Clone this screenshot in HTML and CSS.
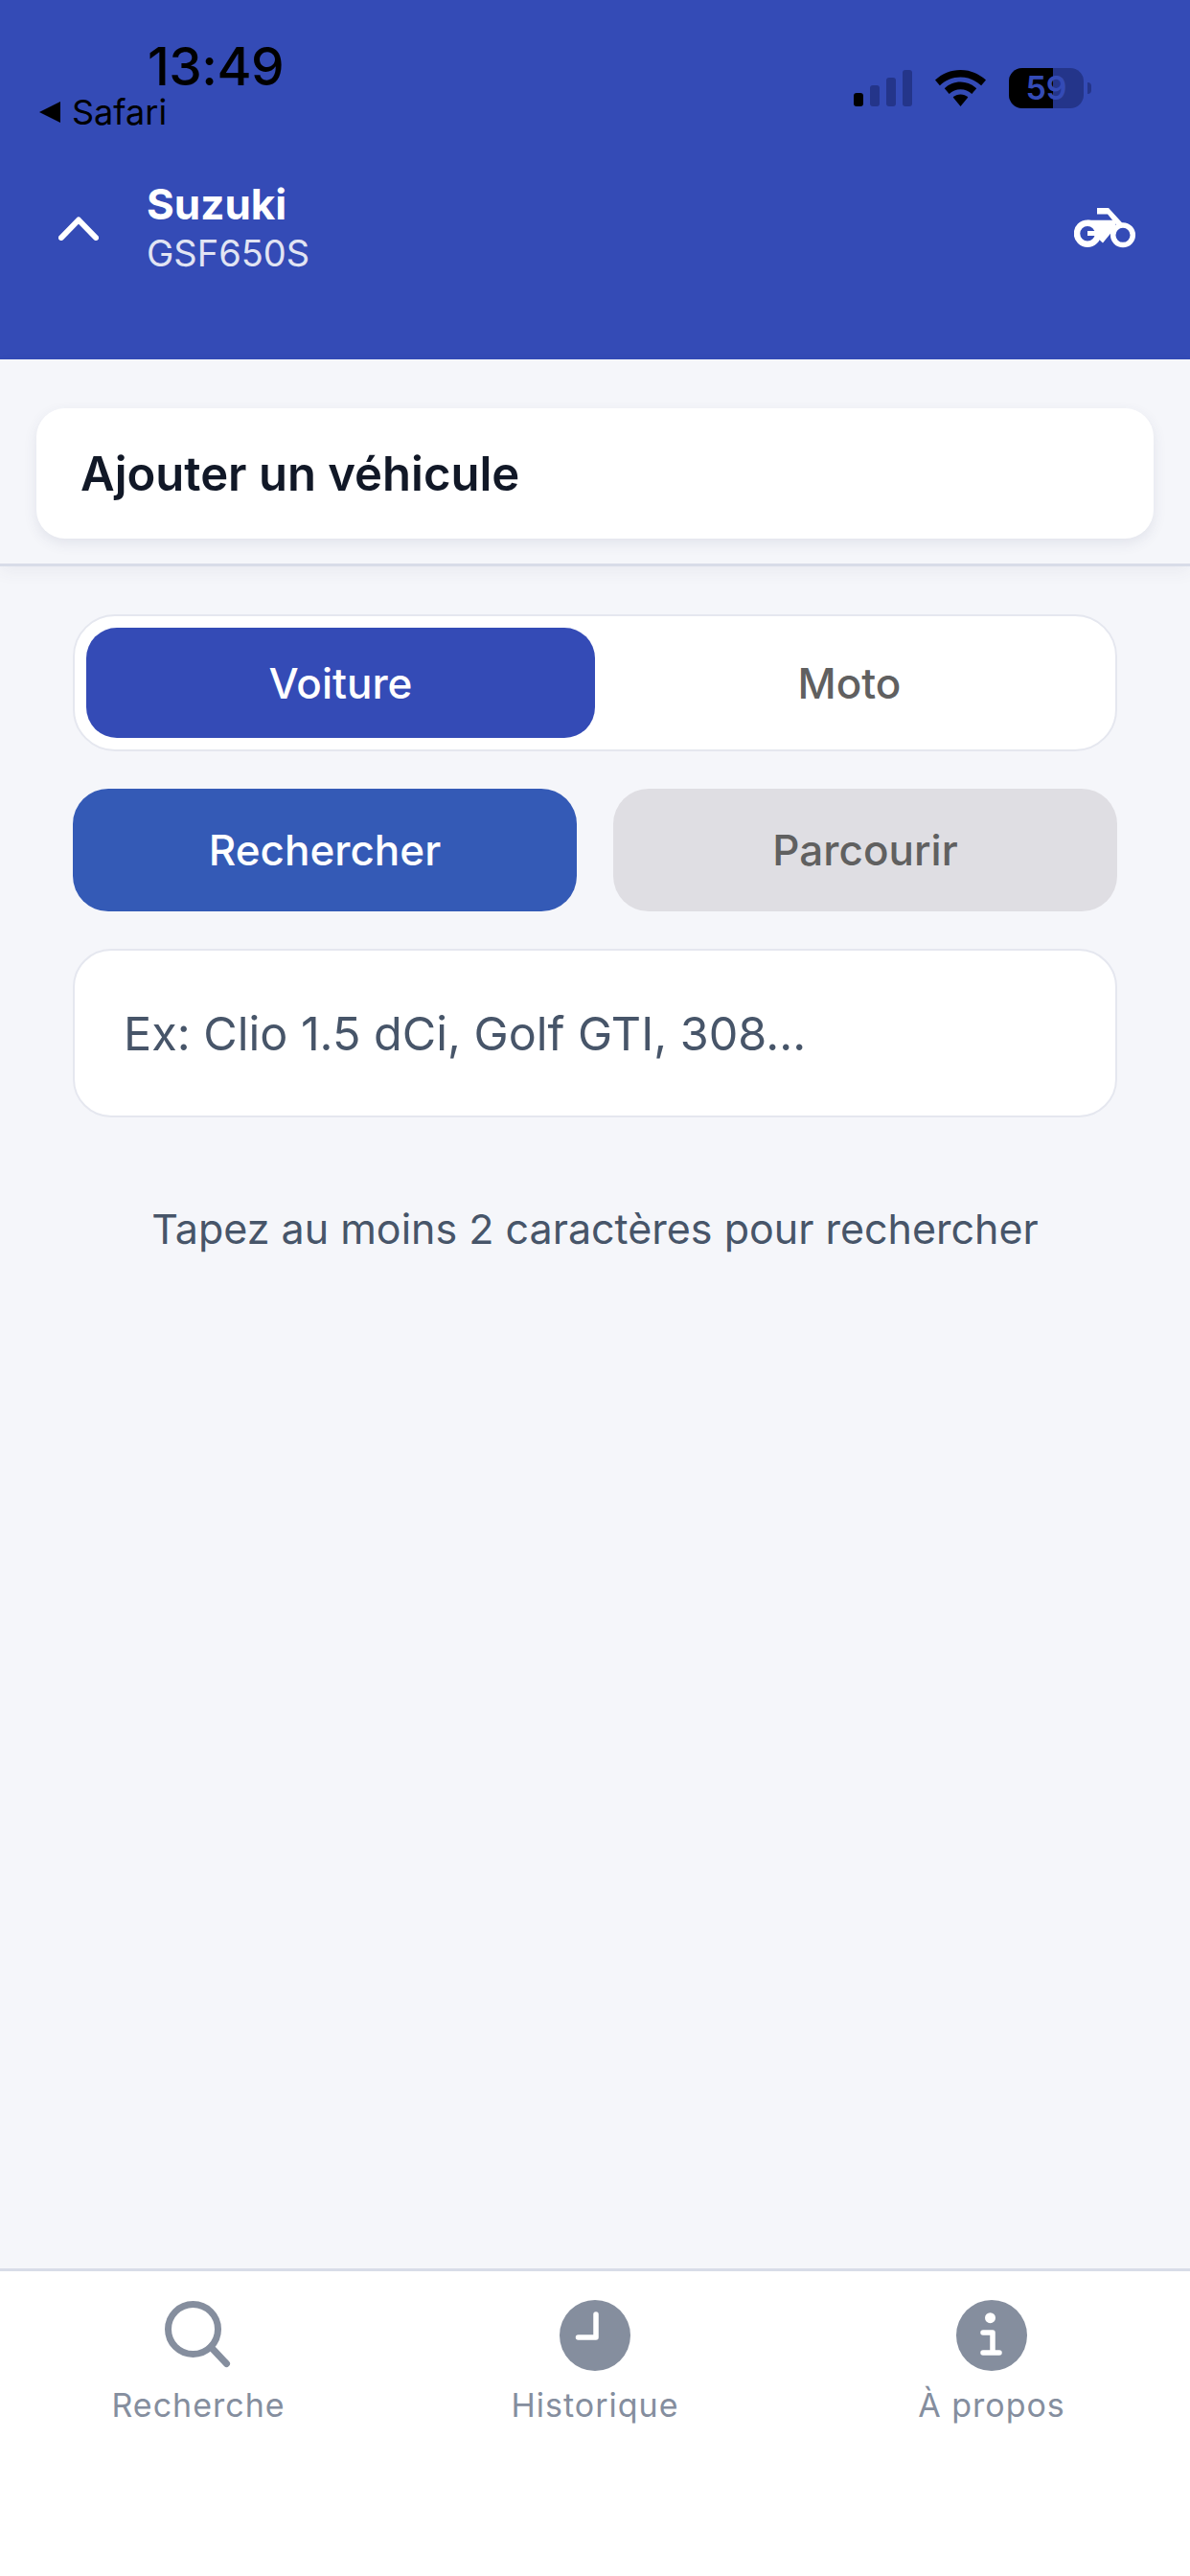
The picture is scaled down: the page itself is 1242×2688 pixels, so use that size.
FILE: index.html
```html
<!DOCTYPE html>
<html lang="fr">
<head>
<meta charset="utf-8">
<title>Ajouter un véhicule</title>
<link rel="stylesheet" href="styles.css">
</head>
<body>
<div class="app">
  <header class="header">
    <div class="status">
      <div class="status-left">
        <div class="time">13:49</div>
        <div class="back"><span class="back-arrow"></span><span>Safari</span></div>
      </div>
      <div class="status-right">
        <div class="signal">
          <span class="bar bar1"></span><span class="bar bar2"></span><span class="bar bar3"></span><span class="bar bar4"></span>
        </div>
        <svg class="wifi" viewBox="0 0 53 38" width="53" height="38"><path d="M26.500 0C16.300 0 7.200 4 0 10.500L4.900 16.300C10.700 10.900 18.200 7.600 26.500 7.600S42.300 10.900 48.100 16.300L53 10.500C45.800 4 36.700 0 26.500 0Z"/><path d="M26.500 12.600C20.100 12.600 14.200 15.100 9.800 19.200L14.700 25C17.800 22.100 22 20.300 26.500 20.300S35.200 22.100 38.300 25L43.200 19.200C38.800 15.100 32.900 12.600 26.500 12.600Z"/><path d="M26.500 25.400C23.500 25.400 20.700 26.600 18.700 28.600L26.500 38L34.300 28.600C32.300 26.600 29.500 25.400 26.500 25.400Z"/></svg>
        <div class="battery">
          <div class="battery-body"><span class="battery-fill"></span><span class="battery-num">59</span></div>
          <span class="battery-nub"></span>
        </div>
      </div>
    </div>
    <div class="vehicle">
      <svg class="chevron" viewBox="0 0 42 25" width="42" height="25"><path d="M3 22L21 3.500L39 22"/></svg>
      <div class="vehicle-text">
        <div class="brand">Suzuki</div>
        <div class="model">GSF650S</div>
      </div>
      <svg class="moto" viewBox="0 0 68 46" width="68" height="46">
        <path class="moto-solid" d="M24 1H36L52 18.500L46 21L35 7.500H24Z"/>
        <path class="moto-solid" d="M14 13.700H43L43.500 21L30 37.500L25 33V20H14Z"/>
        <circle class="moto-left" cx="14" cy="27.700" r="11"/>
        <circle class="moto-right" cx="51" cy="29.300" r="10.300"/>
        <rect class="moto-solid" x="14" y="25" width="13" height="5"/>
      </svg>
    </div>
  </header>

  <section class="add-section">
    <div class="add-card">Ajouter un véhicule</div>
  </section>

  <main class="main">
    <div class="segment">
      <div class="seg-item seg-active">Voiture</div>
      <div class="seg-item">Moto</div>
    </div>
    <div class="modes">
      <div class="mode mode-active">Rechercher</div>
      <div class="mode mode-idle">Parcourir</div>
    </div>
    <div class="search-input">Ex: Clio 1.5 dCi, Golf GTI, 308...</div>
    <p class="hint">Tapez au moins 2 caractères pour rechercher</p>
  </main>

  <nav class="tabs">
    <div class="tab">
      <svg class="tab-icon" viewBox="0 0 74 74" width="74" height="74"><circle class="icon-line" cx="31.500" cy="30.500" r="26"/><path class="icon-line" d="M50 49L66.500 66.500"/></svg>
      <span class="tab-label">Recherche</span>
    </div>
    <div class="tab">
      <svg class="tab-icon" viewBox="0 0 74 74" width="74" height="74"><circle class="icon-fill" cx="37" cy="37" r="37"/><path class="icon-mark" d="M38 15V39H19.500"/></svg>
      <span class="tab-label">Historique</span>
    </div>
    <div class="tab">
      <svg class="tab-icon" viewBox="0 0 74 74" width="74" height="74"><circle class="icon-fill" cx="37" cy="37" r="37"/><circle class="icon-dot" cx="35.500" cy="18.700" r="5.500"/><path class="icon-mark" d="M28 34H38V55M28 55H45"/></svg>
      <span class="tab-label">À propos</span>
    </div>
  </nav>
</div>
</body>
</html>
```

FILE: styles.css
```css
* {
  box-sizing: border-box;
}

html,
body {
  margin: 0;
  padding: 0;
}

body {
  width: 1242px;
  height: 2688px;
  overflow: hidden;
  font-family: Inter, "Noto Sans", "Liberation Sans", sans-serif;
  background: #f5f6fa;
}

.app {
  display: flex;
  flex-direction: column;
  height: 2688px;
}

/* Header */
.header {
  height: 375px;
  flex: none;
  background: #344bb6;
  display: flex;
  flex-direction: column;
}

.status {
  height: 135px;
  display: flex;
  justify-content: space-between;
  align-items: flex-start;
  color: #000;
}

.status-left {
  padding: 40px 0 0 41px;
}

.time {
  margin-left: 113px;
  font-size: 55px;
  line-height: 58px;
  font-weight: 500;
  letter-spacing: -0.5px;
}

.back {
  display: flex;
  align-items: center;
  gap: 12px;
  font-size: 36px;
  line-height: 38px;
}

.back-arrow {
  width: 0;
  height: 0;
  border-style: solid;
  border-width: 11px 22px 11px 0;
  border-color: transparent #000 transparent transparent;
}

.status-right {
  display: flex;
  align-items: flex-start;
  padding: 71px 103px 0 0;
}

.signal {
  display: flex;
  align-items: flex-end;
  gap: 7px;
  height: 38px;
  margin-top: 2px;
  margin-right: 24px;
}

.bar {
  width: 10px;
  border-radius: 3px;
  background: #24358a;
}

.bar1 {
  height: 14px;
  background: #000;
}

.bar2 {
  height: 22px;
}

.bar3 {
  height: 30px;
}

.bar4 {
  height: 38px;
}

.wifi {
  display: block;
  margin-top: 2px;
  margin-right: 24px;
  fill: #000;
}

.battery {
  display: flex;
  align-items: center;
  gap: 4px;
}

.battery-body {
  position: relative;
  width: 78px;
  height: 42px;
  border-radius: 14px;
  background: #24358a;
  overflow: hidden;
}

.battery-fill {
  position: absolute;
  left: 0;
  top: 0;
  bottom: 0;
  width: 46px;
  background: #000;
}

.battery-num {
  position: absolute;
  left: 0;
  right: 0;
  top: 0;
  text-align: center;
  font-size: 34px;
  line-height: 42px;
  font-weight: 600;
  color: #344bb6;
}

.battery-nub {
  width: 4px;
  height: 12px;
  border-radius: 0 6px 6px 0;
  background: #24358a;
}

.vehicle {
  display: flex;
  align-items: center;
  padding: 52px 53px 0 61px;
}

.chevron {
  display: block;
  fill: none;
  stroke: #fff;
  stroke-width: 6;
  stroke-linecap: round;
  stroke-linejoin: round;
}

.vehicle-text {
  margin-left: 50px;
  flex: 1;
}

.brand {
  font-size: 44px;
  line-height: 52px;
  font-weight: 700;
  color: #fff;
}

.model {
  font-size: 38px;
  line-height: 51px;
  font-weight: 400;
  color: #e1e4f3;
}

.moto {
  display: block;
}

.moto-solid {
  fill: #fff;
}

.moto-left {
  fill: none;
  stroke: #fff;
  stroke-width: 6.500;
}

.moto-right {
  fill: none;
  stroke: #fff;
  stroke-width: 5.500;
}

/* Add card */
.add-section {
  flex: none;
  padding: 51px 38px 26px;
  border-bottom: 3px solid #d8dce8;
  box-shadow: 0 6px 16px rgba(60, 70, 110, 0.06);
}

.add-card {
  height: 136px;
  padding-left: 46px;
  display: flex;
  align-items: center;
  background: #fff;
  border-radius: 30px;
  box-shadow: 0 5px 14px rgba(60, 70, 110, 0.1);
  font-size: 49px;
  font-weight: 600;
  color: #111827;
}

/* Main */
.main {
  flex: 1;
  padding: 50px 76px 0;
}

.segment {
  height: 143px;
  padding: 12px;
  display: flex;
  gap: 0;
  background: #fff;
  border: 2px solid #e5e7ef;
  border-radius: 44px;
}

.seg-item {
  flex: 1;
  display: flex;
  align-items: center;
  justify-content: center;
  border-radius: 32px;
  font-size: 44px;
  font-weight: 500;
  color: #606060;
}

.seg-active {
  background: #344bb6;
  color: #fff;
}

.modes {
  display: flex;
  gap: 38px;
  margin-top: 39px;
}

.mode {
  flex: 1;
  height: 128px;
  display: flex;
  align-items: center;
  justify-content: center;
  border-radius: 37px;
  font-size: 44px;
  font-weight: 500;
}

.mode-active {
  background: #345ab6;
  color: #fff;
}

.mode-idle {
  background: #dfdee3;
  color: #606060;
}

.search-input {
  height: 176px;
  margin-top: 39px;
  padding-left: 51px;
  display: flex;
  align-items: center;
  background: #fff;
  border: 2px solid #e5e7ef;
  border-radius: 40px;
  font-size: 48.500px;
  color: #475569;
}

.hint {
  margin: 88px 0 0;
  text-align: center;
  font-size: 43px;
  line-height: 56px;
  color: #475569;
}

/* Tabs */
.tabs {
  flex: none;
  height: 321px;
  padding-top: 30px;
  display: flex;
  background: #fff;
  border-top: 3px solid #d8dce8;
}

.tab {
  flex: 1;
  display: flex;
  flex-direction: column;
  align-items: center;
}

.tab-icon {
  display: block;
}

.tab-label {
  margin-top: 14px;
  font-size: 34px;
  line-height: 44px;
  font-weight: 400;
  letter-spacing: 1px;
  color: #858e9e;
}

.icon-line {
  fill: none;
  stroke: #858e9e;
  stroke-width: 7;
  stroke-linecap: round;
}

.icon-fill {
  fill: #858e9e;
}

.icon-dot {
  fill: #fff;
}

.icon-mark {
  fill: none;
  stroke: #fff;
  stroke-width: 5.500;
  stroke-linecap: round;
  stroke-linejoin: round;
}
```
